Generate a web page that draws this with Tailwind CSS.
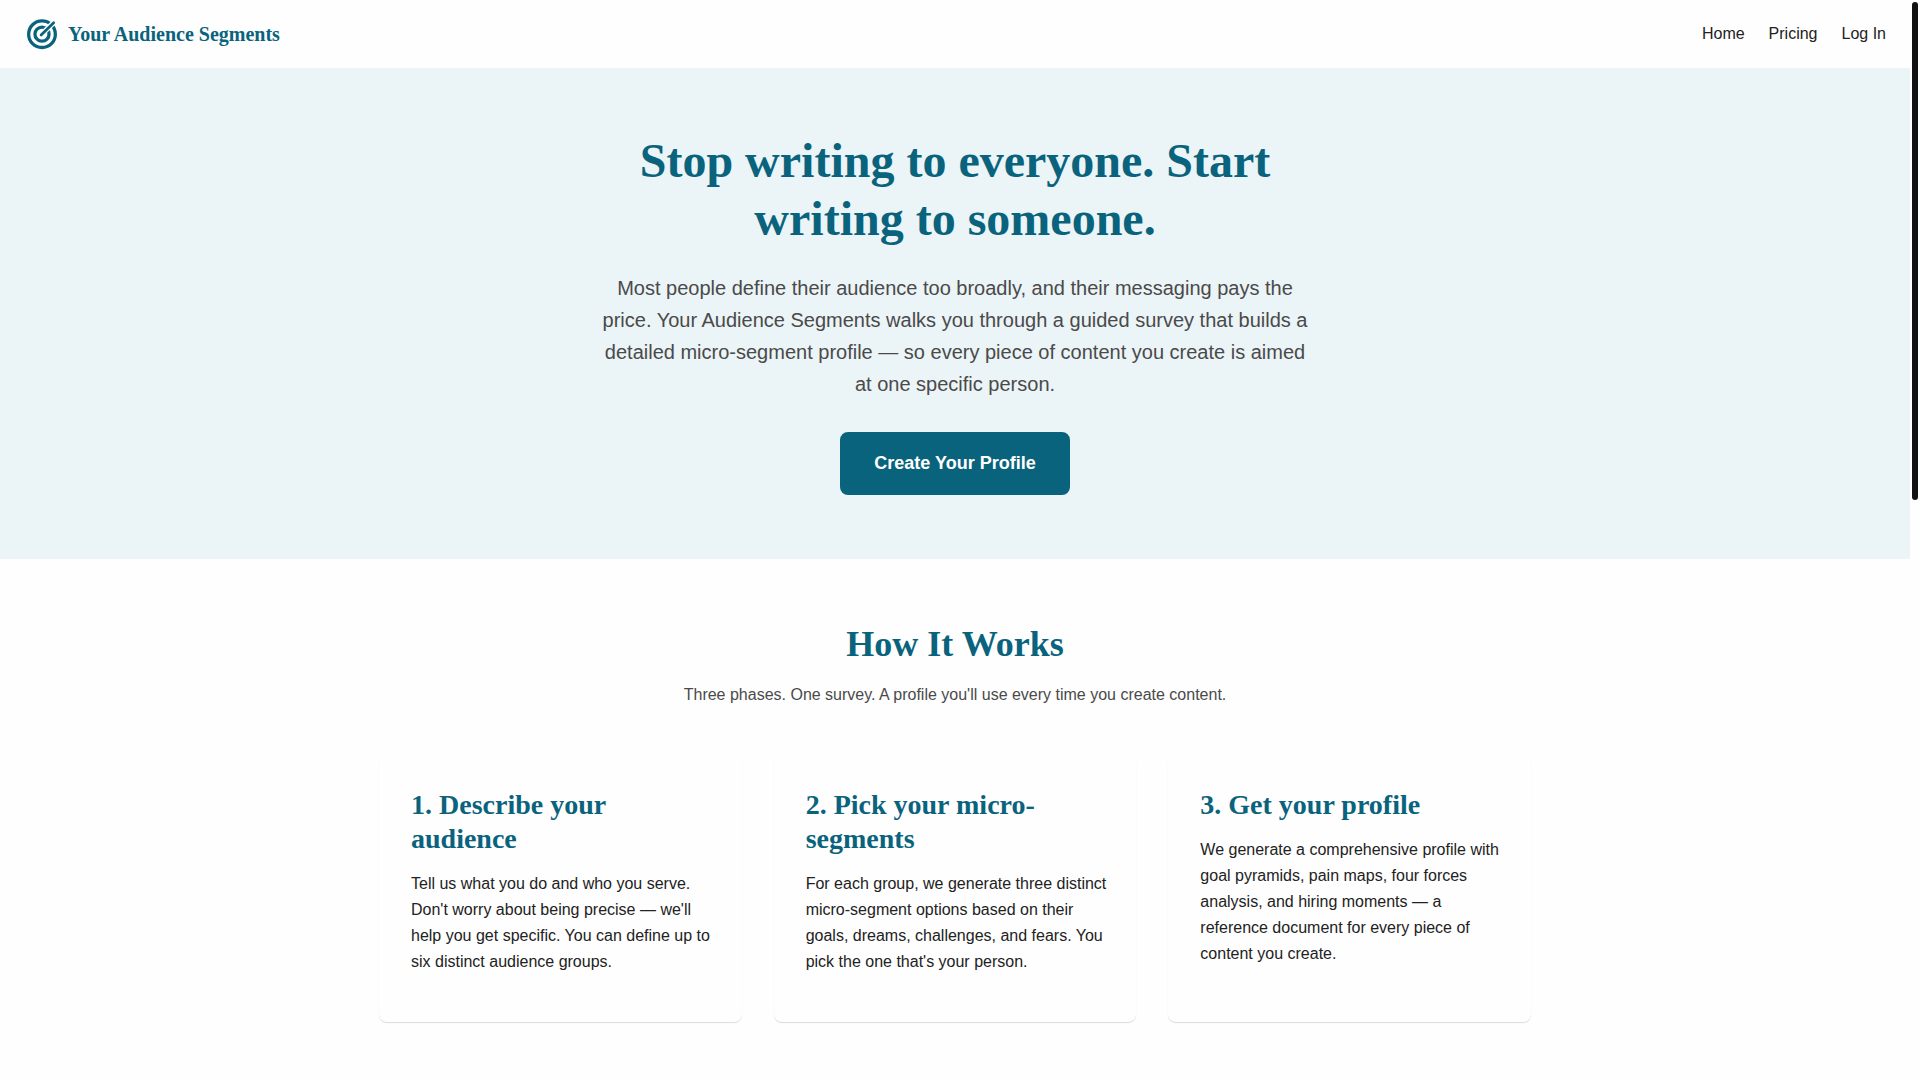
<!doctype html>
<html lang="en">

<head>
  <title>Your Audience Segments</title>
  <meta charset="UTF-8">
  <meta name="viewport" content="width=device-width, initial-scale=1.0">
  <script src="https://cdn.jsdelivr.net/npm/@tailwindcss/browser@4"></script>
</head>
<body class="flex h-screen overflow-hidden bg-[#fefefe] font-['Liberation_Sans',sans-serif] text-base text-[#222222]">

  <div class="min-w-0 flex-1 overflow-hidden">
    <header class="flex items-center justify-between px-6 py-4">
      <a href="#" class="flex items-center gap-2 text-[#0a637d]">
        <svg class="size-9" viewBox="0 0 24 24" fill="none" stroke="currentColor" stroke-width="2.2">
          <circle cx="12" cy="12.1" r="8.9" />
          <circle cx="12" cy="12.1" r="4.7" />
          <path d="M12 12 19.6 4.6" stroke="#fefefe" stroke-width="3.6" />
          <path d="M11.4 12.7 19.8 4.5" stroke-width="1.8" stroke-linecap="round" />
        </svg>
        <span class="font-['Liberation_Serif',serif] text-xl font-bold">Your Audience Segments</span>
      </a>
      <nav class="flex gap-6">
        <a href="#">Home</a>
        <a href="#">Pricing</a>
        <a href="#">Log In</a>
      </nav>
    </header>

    <!-- Hero -->
    <section class="bg-[#ebf4f7] py-16 text-center">
      <div class="mx-auto max-w-[720px]">
        <h1 class="mb-6 font-['Liberation_Serif',serif] text-5xl leading-[58px] font-bold text-[#0a637d]">Stop writing to everyone. Start writing to someone.</h1>
        <p class="mb-8 text-xl leading-8 text-[#4a4a4a]">Most people define their audience too broadly, and their messaging pays the price. Your Audience Segments walks you through a guided survey that builds a detailed micro-segment profile — so every piece of content you create is aimed at one specific person.</p>
        <button class="block mx-auto rounded-lg border-2 border-[#0a637d] bg-[#0a637d] px-8 py-[15px] text-lg leading-[29px] font-bold text-[#fefefe]">Create Your Profile</button>
      </div>
    </section>

    <!-- How it works -->
    <section class="mx-auto max-w-[1200px] px-6 py-16">
      <div class="mb-12 text-center">
        <h2 class="mb-4 font-['Liberation_Serif',serif] text-4xl leading-[43px] font-bold text-[#0a637d]">How It Works</h2>
        <p class="leading-[26px] text-[#4a4a4a]">Three phases. One survey. A profile you'll use every time you create content.</p>
      </div>
      <div class="grid grid-cols-3 gap-8">
        <div class="rounded-lg py-8 pr-7 pl-8 bg-[#fefefe] shadow-[0_1px_1px_rgba(0,0,0,0.14)]">
          <h3 class="mb-[15px] font-['Liberation_Serif',serif] text-[28px] leading-[34px] font-bold text-[#0a637d]">1. Describe your audience</h3>
          <p class="mb-[15px] leading-[26px]">Tell us what you do and who you serve. Don't worry about being precise — we'll help you get specific. You can define up to six distinct audience groups.</p>
        </div>
        <div class="rounded-lg py-8 pr-7 pl-8 bg-[#fefefe] shadow-[0_1px_1px_rgba(0,0,0,0.14)]">
          <h3 class="mb-[15px] font-['Liberation_Serif',serif] text-[28px] leading-[34px] font-bold text-[#0a637d]">2. Pick your micro-segments</h3>
          <p class="mb-[15px] leading-[26px]">For each group, we generate three distinct micro-segment options based on their goals, dreams, challenges, and fears. You pick the one that's your person.</p>
        </div>
        <div class="rounded-lg py-8 pr-7 pl-8 bg-[#fefefe] shadow-[0_1px_1px_rgba(0,0,0,0.14)]">
          <h3 class="mb-[15px] font-['Liberation_Serif',serif] text-[28px] leading-[34px] font-bold text-[#0a637d]">3. Get your profile</h3>
          <p class="mb-[15px] leading-[26px]">We generate a comprehensive profile with goal pyramids, pain maps, four forces analysis, and hiring moments — a reference document for every piece of content you create.</p>
        </div>
      </div>
    </section>
  </div>

  <!-- Scroll bar -->
  <div class="w-[10px] shrink-0 p-[2px]">
    <div class="h-[498px] rounded-full bg-[#111111]"></div>
  </div>

</body>
</html>
